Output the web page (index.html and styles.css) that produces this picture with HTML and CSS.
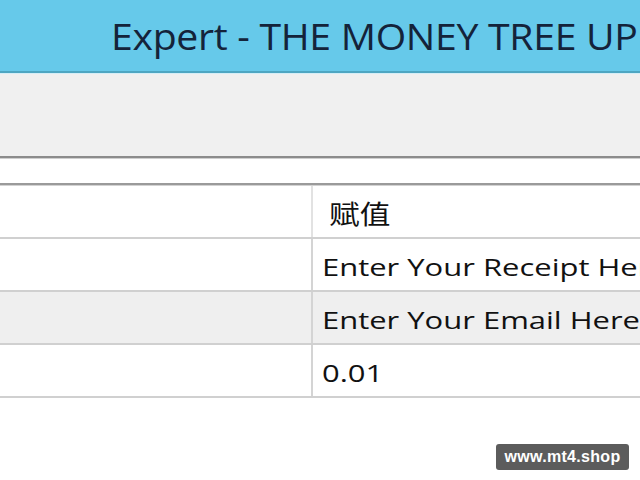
FILE: index.html
```html
<!DOCTYPE html>
<html>
<head>
<meta charset="utf-8">
<link rel="stylesheet" href="styles.css">
</head>
<body>
<div class="titlebar"><span class="title">Expert - THE MONEY TREE UPDATE</span></div>
<div class="toolbar"></div>
<div class="tabs"></div>
<div class="grid">
  <div class="row head"><div class="c1"></div><div class="c2"><span class="txt cjk">赋值</span></div></div>
  <div class="row"><div class="c1"></div><div class="c2"><span class="txt">Enter Your Receipt Here</span></div></div>
  <div class="row alt"><div class="c1"></div><div class="c2"><span class="txt">Enter Your Email Here</span></div></div>
  <div class="row"><div class="c1"></div><div class="c2"><span class="txt">0.01</span></div></div>
</div>
<div class="mark">www.mt4.shop</div>
</body>
</html>
```
FILE: styles.css
```css
html, body {
  margin: 0;
  padding: 0;
  width: 640px;
  height: 480px;
  overflow: hidden;
  background: #ffffff;
  font-family: "Open Sans", "Noto Sans", sans-serif;
  position: relative;
}
.titlebar {
  height: 71px;
  background: #66c9ea;
  border-bottom: 2px solid #4ea6c2;
  box-shadow: 0 1px 0 #d6eef7;
  white-space: nowrap;
  overflow: hidden;
  margin-bottom: 1px;
}
.title {
  display: inline-block;
  margin-left: 111px;
  padding-top: 11px;
  font-size: 37px;
  line-height: 50px;
  color: #14233a;
  letter-spacing: -0.3px;
  transform: scaleX(1.06);
  transform-origin: left center;
}
.toolbar {
  height: 82px;
  background: #f0f0f0;
  border-bottom: 2px solid #8c8c8c;
  box-shadow: 0 1px 0 #cfcfcf;
}
.tabs {
  height: 24px;
  margin-top: 1px;
  background: #ffffff;
  border-bottom: 2px solid #9a9a9a;
  box-shadow: 0 1px 0 #d2d2d2;
}
.grid {
  margin-top: 1px;
}
.row {
  display: flex;
  height: 51px;
  border-bottom: 2px solid #d0d0d0;
  background: #ffffff;
}
.row.alt {
  background: #efefef;
}
.c1 {
  width: 311px;
  border-right: 2px solid #d4d4d4;
}
.c2 {
  flex: 1;
  padding-left: 9px;
  padding-top: 3px;
  white-space: nowrap;
  overflow: hidden;
}
.txt {
  display: inline-block;
  font-size: 24px;
  line-height: 50px;
  color: #111111;
  transform: scaleX(1.29);
  transform-origin: left center;
}
.head .c1 { border-right-color: #e2e2e2; }
.head .c2 {
  padding-left: 16px;
  padding-top: 2px;
}
.cjk {
  font-family: "Noto Sans CJK SC", sans-serif;
  font-size: 26px;
  transform: scaleX(1.18);
}
.mark {
  position: absolute;
  left: 496px;
  top: 444px;
  width: 133px;
  height: 26px;
  background: #5c5c5c;
  border-radius: 3px;
  color: #ffffff;
  font-family: "Liberation Sans", Arial, sans-serif;
  font-weight: bold;
  font-size: 16px;
  line-height: 26px;
  text-align: center;
  letter-spacing: 0.3px;
}
```
